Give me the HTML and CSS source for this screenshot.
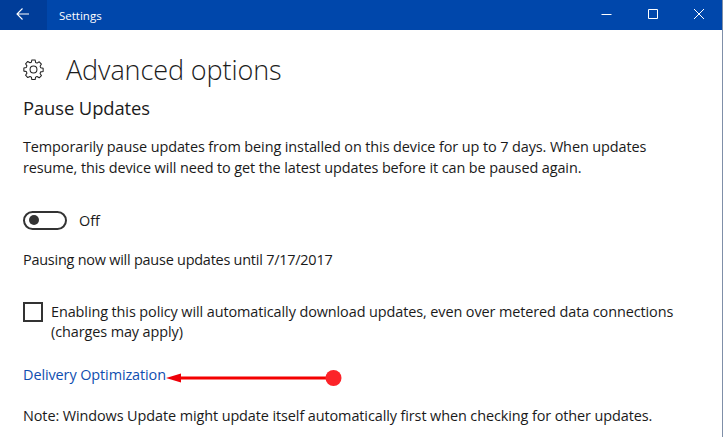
FILE: index.html
```html
<!DOCTYPE html>
<html lang="en">
<head>
<meta charset="utf-8">
<title>Settings</title>
<link rel="stylesheet" href="styles.css">
</head>
<body>
<div class="window">
  <header class="titlebar">
    <div class="back">
      <svg width="16" height="16" viewBox="0 0 16 16"><path d="M14 8H2M7.500 2.500L2 8l5.500 5.500" fill="none" stroke="#fff" stroke-width="1.1"/></svg>
    </div>
    <div class="title">Settings</div>
    <div class="controls">
      <svg class="ctl" width="46" height="30" viewBox="0 0 46 30"><path d="M17.5 14.5h10" stroke="#fff" fill="none"/></svg>
      <svg class="ctl" width="46" height="30" viewBox="0 0 46 30"><path d="M18.5 9.5h9v9h-9z" stroke="#fff" fill="none"/></svg>
      <svg class="ctl" width="46" height="30" viewBox="0 0 46 30"><path d="M18 9l10 10M28 9L18 19" stroke="#fff" fill="none"/></svg>
    </div>
  </header>
  <main class="content">
    <div class="page-head">
      <svg class="gear" width="21" height="21" viewBox="0 0 22 22"><path d="M9.3 1.5h3.4l.5 2.6 1.5.7 2.3-1.4 2.3 2.4-1.4 2.2.6 1.6 2.6.6v3.3l-2.6.5-.6 1.6 1.4 2.2-2.3 2.4-2.3-1.4-1.5.7-.5 2.6H9.3l-.5-2.6-1.5-.7L5 19.9l-2.3-2.4 1.4-2.2-.6-1.6-2.6-.5V9.9l2.6-.6.6-1.6-1.4-2.2L5 3.1l2.3 1.4 1.5-.7z" transform="translate(0 -.5)" fill="none" stroke="#222" stroke-width="1.1" stroke-linejoin="round"/><circle cx="11" cy="11" r="3.6" fill="none" stroke="#222" stroke-width="1.1"/></svg>
      <h1 class="page-title">Advanced options</h1>
    </div>
    <h2 class="section-title">Pause Updates</h2>
    <p class="para desc">Temporarily pause updates from being installed on this device for up to 7 days. When updates resume, this device will need to get the latest updates before it can be paused again.</p>
    <div class="toggle-row">
      <span class="toggle"><span class="knob"></span></span>
      <span class="toggle-label">Off</span>
    </div>
    <p class="para pausing">Pausing now will pause updates until 7/17/2017</p>
    <div class="check-row">
      <span class="checkbox"></span>
      <span class="check-label">Enabling this policy will automatically download updates, even over metered data connections (charges may apply)</span>
    </div>
    <div class="link-row">
      <a class="link" href="#">Delivery Optimization</a>
      <svg class="annot" width="176" height="16" viewBox="0 0 176 16"><path d="M14 8H164" stroke="#f40000" stroke-width="3"/><path d="M0 8l15-4.500v9z" fill="#ee0008"/><circle cx="167.500" cy="8" r="8" fill="#fc2329"/></svg>
    </div>
    <p class="para note">Note: Windows Update might update itself automatically first when checking for other updates.</p>
  </main>
</div>
</body>
</html>
```
FILE: styles.css
```css
html, body { margin: 0; padding: 0; background: #fff; }
body { width: 724px; height: 437px; overflow: hidden; font-family: "Open Sans", "Noto Sans", sans-serif; color: #1a1a1a; }
.window { width: 722px; height: 437px; border-right: 1px solid #7f8fa8; background: #fff; }
.titlebar { display: flex; align-items: center; height: 30px; background: #0047ab; color: #fff; }
.back { width: 47px; height: 30px; background: #003d99; display: flex; align-items: center; justify-content: center; box-sizing: border-box; padding: 0 1px 2px 0; }
.title { margin-left: 12px; font-size: 11.5px; flex: 1; }
.controls { display: flex; margin-right: 0; }
.ctl { display: block; }
.content { padding: 0 0 0 23px; }
.page-head { display: flex; align-items: center; height: 66px; padding-top: 12px; box-sizing: border-box; }
.gear { margin-right: 22px; }
.page-title { margin: 0; font-size: 27px; font-weight: 300; color: #1c1c1c; letter-spacing: -.1px; }
.section-title { margin: 0; font-size: 18.4px; font-weight: 400; line-height: 24px; height: 24px; letter-spacing: -.1px; color: #1c1c1c; }
.para { margin: 0; font-size: 14.45px; line-height: 21px; letter-spacing: -.1px; }
.desc { margin-top: 16px; width: 640px; height: 42px; }
.toggle-row { display: flex; align-items: center; margin-top: 32px; height: 20px; }
.toggle { display: flex; align-items: center; width: 44px; height: 19px; box-sizing: border-box; border: 2px solid #333; border-radius: 10px; padding-left: 4px; }
.knob { width: 10px; height: 10px; border-radius: 50%; background: #333; }
.toggle-label { margin-left: 12px; font-size: 14.45px; letter-spacing: -.1px; }
.para.pausing { margin-top: 19px; letter-spacing: -.23px; }
.check-row { display: flex; margin-top: 32px; }
.checkbox { flex: none; width: 20px; height: 20px; box-sizing: border-box; border: 2px solid #333; margin-right: 8px; }
.check-label { font-size: 14.45px; line-height: 20px; letter-spacing: -.1px; width: 640px; }
.link-row { position: relative; margin-top: 21px; height: 21px; }
.link { font-size: 14.45px; line-height: 21px; color: #0f4eb0; text-decoration: none; letter-spacing: -.1px; }
.annot { position: absolute; left: 143px; top: 7px; }
.note { margin-top: 21px; }
```
